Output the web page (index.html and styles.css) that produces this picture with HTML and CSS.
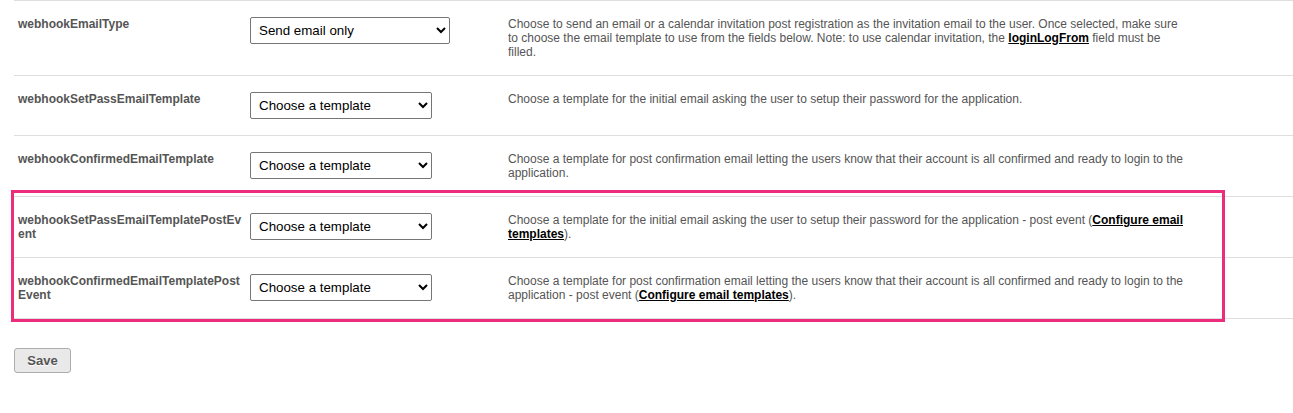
FILE: index.html
```html
<!DOCTYPE html>
<html>
<head>
<meta charset="utf-8">
<link rel="stylesheet" href="styles.css">
</head>
<body>
<div class="page">
  <div class="settings">
    <div class="row">
      <div class="label">webhookEmailType</div>
      <div class="field"><select class="sel sel-wide"><option>Send email only</option></select></div>
      <div class="desc">Choose to send an email or a calendar invitation post registration as the invitation email to the user. Once selected, make sure to choose the email template to use from the fields below. Note: to use calendar invitation, the <a class="lnk" href="#">loginLogFrom</a> field must be filled.</div>
    </div>
    <div class="row">
      <div class="label">webhookSetPassEmailTemplate</div>
      <div class="field"><select class="sel"><option>Choose a template</option></select></div>
      <div class="desc">Choose a template for the initial email asking the user to setup their password for the application.</div>
    </div>
    <div class="row">
      <div class="label">webhookConfirmedEmailTemplate</div>
      <div class="field"><select class="sel"><option>Choose a template</option></select></div>
      <div class="desc">Choose a template for post confirmation email letting the users know that their account is all confirmed and ready to login to the application.</div>
    </div>
    <div class="row">
      <div class="label">webhookSetPassEmailTemplatePostEvent</div>
      <div class="field"><select class="sel"><option>Choose a template</option></select></div>
      <div class="desc">Choose a template for the initial email asking the user to setup their password for the application - post event (<a class="lnk" href="#">Configure email templates</a>).</div>
    </div>
    <div class="row">
      <div class="label">webhookConfirmedEmailTemplatePostEvent</div>
      <div class="field"><select class="sel"><option>Choose a template</option></select></div>
      <div class="desc">Choose a template for post confirmation email letting the users know that their account is all confirmed and ready to login to the application - post event (<a class="lnk" href="#">Configure email templates</a>).</div>
    </div>
  </div>
  <div class="actions">
    <button class="save" type="button">Save</button>
  </div>
  <div class="highlight"></div>
</div>
</body>
</html>
```

FILE: styles.css
```css
html, body {
  margin: 0;
  padding: 0;
  background: #ffffff;
}

body {
  font-family: "Liberation Sans", Arial, sans-serif;
  font-size: 12px;
  color: #555555;
}

.page {
  position: relative;
  padding-left: 14px;
  width: 1279px;
}

.settings {
  border-bottom: 1px solid #dedede;
}

.row {
  display: grid;
  grid-template-columns: 236px 258px 678px 1fr;
  border-top: 1px solid #dedede;
  padding: 16px 0;
  align-items: start;
}

.label {
  padding: 0 5px 0 4px;
  font-weight: bold;
  line-height: 14px;
  color: #555555;
  overflow-wrap: anywhere;
  word-break: break-all;
}

.field {
  display: flex;
}

.sel {
  width: 182px;
  height: 27px;
  box-sizing: border-box;
  border: 1px solid #767676;
  border-radius: 2px;
  background-color: #ffffff;
  color: #000000;
  font-family: "Liberation Sans", Arial, sans-serif;
  font-size: 13.333px;
  padding: 0 4px 0 4px;
  margin: 0;
}

.sel-wide {
  width: 200px;
}

.desc {
  line-height: 14px;
  color: #555555;
}

.lnk {
  color: #000000;
  font-weight: bold;
  text-decoration: underline;
}

.actions {
  padding-top: 29px;
}

.save {
  width: 57px;
  height: 25px;
  box-sizing: border-box;
  border: 1px solid #adadad;
  border-radius: 3px;
  background: #e9e9e9;
  color: #555555;
  font-family: "Liberation Sans", Arial, sans-serif;
  font-weight: bold;
  font-size: 13px;
  padding: 0;
  margin: 0;
  text-shadow: 0 1px 0 #ffffff;
}

.highlight {
  position: absolute;
  left: 11px;
  top: 190px;
  width: 1214px;
  height: 132px;
  box-sizing: border-box;
  border: 3px solid #ec2d7b;
  pointer-events: none;
}
```
